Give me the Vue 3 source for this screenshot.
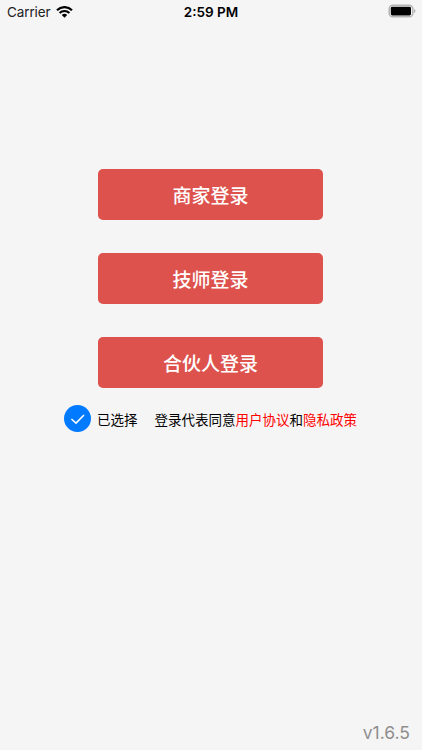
<script setup>
    import { ref } from 'vue'

    const buttons = ref([
        { id: 1, label: '商家登录' },
        { id: 2, label: '技师登录' },
        { id: 3, label: '合伙人登录' }
    ])

    const checked = ref(true)
    const version = ref('v1.6.5')

    const toggleAgree = () => {
        checked.value = !checked.value
    }
</script>

<template>
    <div class="page">
        <header class="statusBar">
            <div class="carrier">
                <span>Carrier</span>
                <svg class="wifi" viewBox="0 0 17 12">
                    <path d="M1 4.2a10.6 10.6 0 0 1 15 0M3.6 7a7 7 0 0 1 9.8 0" />
                    <path class="dot" d="M8.5 11.8 5.8 9.1a3.9 3.9 0 0 1 5.4 0z" />
                </svg>
            </div>
            <div class="time">2:59 PM</div>
            <div class="batteryBox">
                <svg class="battery" viewBox="0 0 28 14">
                    <rect class="shell" x="1.2" y="1.2" width="23.6" height="11.6" rx="3.6" />
                    <rect x="2.8" y="2.8" width="20.2" height="8.6" rx="1.4" />
                    <path class="cap" d="M26 5v4q1.5-.5 1.5-2T26 5z" />
                </svg>
            </div>
        </header>
        <main class="login">
            <button v-for="{ id, label } in buttons" :key="id" class="loginBtn">{{ label }}</button>
        </main>
        <div class="agree">
            <span class="check" :class="{ off: !checked }" @click="toggleAgree">
                <svg viewBox="0 0 27 27"><path d="M7.4 14 12 18.1 20 9.9" /></svg>
            </span>
            <span class="state">{{ checked ? '已选择' : '未选择' }}</span>
            <span class="terms">登录代表同意<a>用户协议</a>和<a>隐私政策</a></span>
        </div>
        <footer class="version">{{ version }}</footer>
    </div>
</template>

<style>
body {
    background: #f5f5f5;
}
</style>

<style scoped>
.page {
    display: flex;
    flex-direction: column;
    height: 750px;
    overflow: hidden;
    background: #f5f5f5;
    font-family: Inter, "Noto Sans CJK SC", sans-serif;
    color: #000;
}

.statusBar {
    display: grid;
    grid-template-columns: 1fr auto 1fr;
    align-items: center;
    height: 24px;
    padding: 0 7px 0 7px;
    font-size: 13.5px;
}

.carrier {
    display: flex;
    align-items: center;
    gap: 5.5px;
    color: #222;
    letter-spacing: -0.12px;
}

.wifi {
    width: 17px;
    height: 12px;
    fill: none;
    stroke: #000;
    stroke-width: 2.2;
}

.wifi .dot {
    fill: #000;
    stroke: none;
}

.time {
    font-weight: 600;
}

.batteryBox {
    display: flex;
    justify-content: flex-end;
    margin: 0 -1px 1.4px 0;
}

.battery {
    width: 28px;
    height: 14px;
}

.battery .shell {
    fill: none;
    stroke: #b3b3b3;
    stroke-width: 1.5;
}

.battery .cap {
    fill: #b3b3b3;
}

.login {
    display: flex;
    flex-direction: column;
    align-items: center;
    gap: 33px;
    padding: 145px 1px 0 0;
}

.loginBtn {
    width: 225px;
    height: 51px;
    padding: 0;
    border: 0;
    border-radius: 5px;
    background: #dd524d;
    color: #fff;
    font-family: inherit;
    font-size: 19px;
    font-weight: 500;
}

.agree {
    display: flex;
    align-items: center;
    height: 28px;
    margin-top: 16px;
    padding-left: 64px;
    font-size: 13.5px;
    white-space: nowrap;
}

.check {
    width: 27px;
    height: 27px;
    border-radius: 50%;
    background: #007aff;
}

.check.off {
    background: #ccc;
}

.check svg {
    display: block;
    fill: none;
    stroke: #fff;
    stroke-width: 1.5;
}

.state,
.terms {
    padding-top: 2px;
}

.state {
    margin-left: 6px;
}

.terms {
    margin-left: 17px;
}

.terms a {
    color: #f00;
}

.version {
    margin-top: auto;
    padding: 0 12px 6px 0;
    color: #8f8f8f;
    font-size: 17.5px;
    line-height: 22px;
    text-align: right;
}
</style>
